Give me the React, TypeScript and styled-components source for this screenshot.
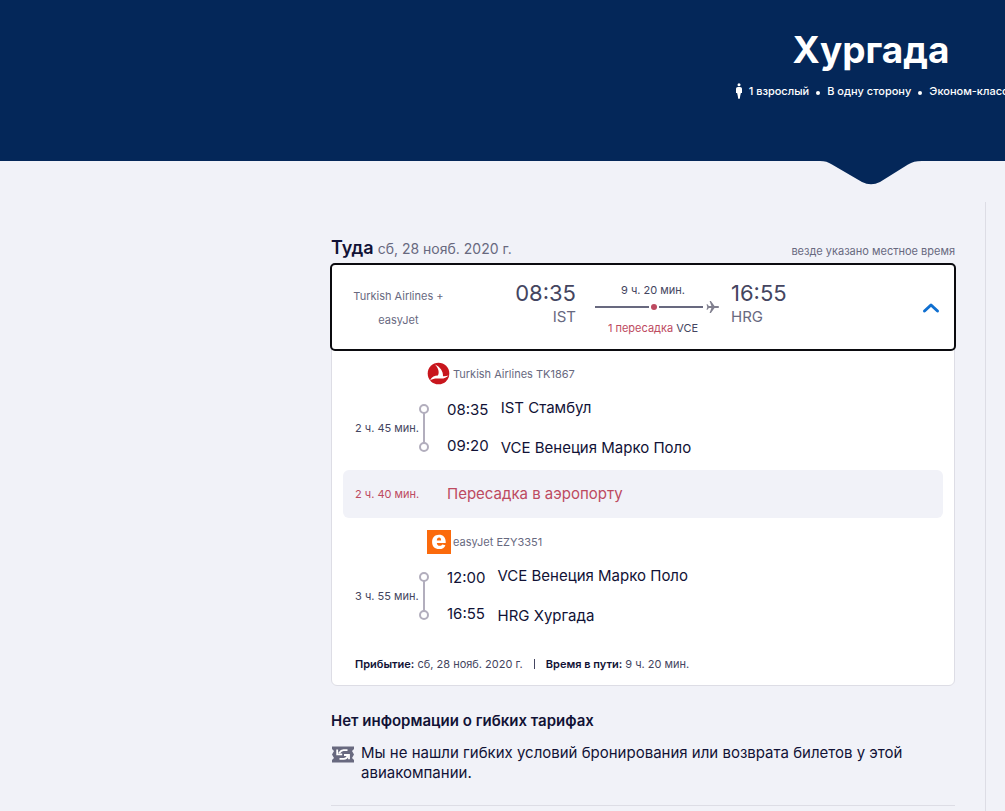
import React from 'react';
import styled, { createGlobalStyle } from 'styled-components';

const color = {
  navy: '#042759',
  page: '#f1f2f8',
  ink: '#111236',
  body: '#444560',
  muted: '#68697f',
  line: '#dddde5',
  rose: '#bd4a60',
};

const GlobalStyle = createGlobalStyle`
  *, *::before, *::after { box-sizing: border-box; }
  body {
    margin: 0;
    background: ${color.page};
    color: ${color.ink};
    font-family: Inter, "Liberation Sans", sans-serif;
    font-size: 15px;
    line-height: 20px;
  }
  h1, h2, p, ul { margin: 0; padding: 0; }
  ul { list-style: none; }
`;

const Page = styled.div`
  display: flex;
  flex-direction: column;
  min-height: 100vh;
  overflow-x: hidden;
`;

const Header = styled.header`
  position: relative;
  padding: 26px 0 60px 735px;
  background: ${color.navy};
  color: #fff;
`;

const HeaderInner = styled.div`
  display: flex;
  flex-direction: column;
  align-items: center;
  gap: 7px;
  width: 272px;
`;

const Title = styled.h1`
  font-size: 37px;
  line-height: 48px;
  font-weight: 650;
`;

const Facts = styled.ul`
  display: flex;
  align-items: center;
  font-size: 11px;
  font-weight: 500;
  white-space: nowrap;
`;

const Fact = styled.li`
  display: flex;
  align-items: center;
  gap: 5px;

  & + &::before {
    content: '';
    width: 4px;
    height: 4px;
    margin: 3px 2px 0 7px;
    border-radius: 50%;
    background: #fff;
  }
`;

const Pointer = styled.svg`
  position: absolute;
  top: 100%;
  left: 820px;
  margin-top: -1px;
`;

const Content = styled.div`
  display: flex;
  flex: 1;
  gap: 30px;
  padding: 41px 0 0 331px;
`;

const Main = styled.main`
  flex: 1;
  min-width: 0;
  padding-top: 33px;
`;

const Aside = styled.aside`
  width: 20px;
  border-left: 1px solid ${color.line};
`;

const LegHeading = styled.div`
  display: flex;
  align-items: flex-end;
  gap: 4px;
  padding-bottom: 3px;
`;

const LegTitle = styled.h2`
  font-size: 18px;
  line-height: 26px;
  font-weight: 600;
`;

const LegDate = styled.span`
  flex: 1;
  font-size: 14px;
  line-height: 24px;
  color: ${color.muted};
`;

const Small = styled.span<{ $tone?: string }>`
  font-size: 11px;
  color: ${(p) => p.$tone || color.muted};
`;

const Card = styled.section`
  border: 1px solid ${color.line};
  border-radius: 6px;
  background: #fff;
`;

const Summary = styled.button`
  display: grid;
  grid-template-columns: 133px 111px 124px 1fr 47px;
  align-items: center;
  width: 100%;
  height: 84px;
  padding: 0;
  border: 0;
  border-radius: 3px;
  outline: 2px solid #0b0b0f;
  background: #fff;
  color: ${color.body};
  font: inherit;
  text-align: left;
  cursor: pointer;
`;

const Airlines = styled.span`
  padding: 2px 16px 0;
  font-size: 11px;
  line-height: 24px;
  text-align: center;
  color: ${color.muted};
`;

const Stop = styled.span`
  display: flex;
  flex-direction: column;
  padding-bottom: 8px;
  text-align: right;
`;

const Arrival = styled(Stop)`
  padding-left: 31px;
  text-align: left;
`;

const StopTime = styled.span`
  font-size: 22px;
  line-height: 28px;
`;

const StopCode = styled.span`
  color: ${color.muted};
`;

const Route = styled.span`
  display: flex;
  flex-direction: column;
  align-items: center;
  width: 124px;
  margin-left: 19px;
  padding-top: 4px;
  font-size: 11px;
  white-space: nowrap;
`;

const RouteText = styled.span`
  padding-right: 8px;
`;

const Accent = styled.span`
  color: ${color.rose};
`;

const RouteLine = styled.svg`
  display: block;
  margin-bottom: 4px;
`;

const Details = styled.div`
  padding: 13px 11px 11px;
`;

const Carrier = styled.div`
  display: flex;
  align-items: center;
  gap: 2px;
  padding-left: 84px;
`;

const Segment = styled.div`
  display: grid;
  grid-template-columns: 74px 12px 1fr;
  align-items: center;
  padding: 18px 0;
`;

const Duration = styled(Small)`
  padding-left: 12px;
  white-space: nowrap;
`;

const SegmentText = styled.div`
  display: flex;
  align-items: center;
  gap: 12px;
  height: 48px;
  padding-left: 18px;
`;

const Times = styled.div`
  display: flex;
  flex-direction: column;
  gap: 16px;
`;

const Places = styled.div`
  display: flex;
  flex-direction: column;
  gap: 20px;
`;

const Transfer = styled.div`
  display: grid;
  grid-template-columns: 104px 1fr;
  align-items: center;
  height: 48px;
  margin-bottom: 12px;
  border-radius: 6px;
  background: ${color.page};
  color: ${color.rose};
`;

const Footer = styled.p`
  display: flex;
  gap: 11px;
  padding: 16px 0 0 12px;
  font-size: 11px;
  color: ${color.body};
`;

const Bar = styled.span`
  width: 1px;
  height: 10px;
  margin-top: 5px;
  background: ${color.body};
`;

const Strong = styled.strong`
  font-weight: 600;
  color: ${color.ink};
`;

const Policy = styled.section`
  margin-top: 25px;
  padding-bottom: 22px;
  border-bottom: 1px solid ${color.line};
`;

const PolicyTitle = styled.h2`
  font-size: 15px;
  line-height: 20px;
  font-weight: 600;
`;

const PolicyBody = styled.div`
  display: flex;
  gap: 6px;
  margin-top: 12px;
`;

const PolicyIcon = styled.svg`
  flex: none;
  margin-top: 3px;
`;

function Adult() {
  return (
    <svg width="10" height="16" viewBox="0 0 10 16" fill="#fff" aria-hidden="true">
      <circle cx="5" cy="1.800" r="1.500" />
      <path d="M4 4h2c1.300 0 2 .7 2 2v4H6.900L6.200 13 5.800 15.800H4.200L3.800 13 3.100 10H2V6C2 4.700 2.700 4 4 4Z" />
    </svg>
  );
}

function TurkishLogo() {
  return (
    <svg width="24" height="24" viewBox="0 0 24 24" aria-hidden="true">
      <circle cx="11.500" cy="11.500" r="10.800" fill="#c8161d" />
      <path
        d="M8 2.600C13 4.800 16.300 9.500 16 14.200c2 .1 3.900-.1 5.600-.7-2.100 2.200-5 3.300-8.300 3.100-3.600-.2-6.800-.6-10.400 1.900 2.100-3.700 4.700-4.900 7.900-4.900C12.600 11 11.700 6.600 8 2.600Z"
        fill="#fff"
      />
    </svg>
  );
}

function EasyJetLogo() {
  return (
    <svg width="24" height="24" viewBox="0 0 24 24" aria-hidden="true">
      <rect width="24" height="24" fill="#fb6a0c" />
      <path
        fillRule="evenodd"
        d="M12 4.700c4.300 0 6.700 2.700 6.700 7.200v1H9.800c.2 1.900 1.200 2.800 2.900 2.800 1.200 0 2.100-.5 2.600-1.300l3.100 .8c-.9 2.500-3.100 3.900-6.300 3.900-4.300 0-7-2.700-7-7.100 0-4.500 2.700-7.300 6.900-7.300ZM9.800 10.500h4.300c0-1.900-.7-2.900-2-2.900-1.400 0-2.200 1-2.300 2.900Z"
        fill="#fff"
      />
    </svg>
  );
}

function SegmentLine() {
  return (
    <svg width="12" height="48" viewBox="0 0 12 48" fill="none" stroke="#b2aebd" strokeWidth="2" aria-hidden="true">
      <path d="M7 9v30" />
      <circle cx="7" cy="5" r="4" fill="#fff" />
      <circle cx="7" cy="43" r="4" fill="#fff" />
    </svg>
  );
}

type SegmentProps = {
  duration: string;
  stops: { time: string; place: string }[];
};

function FlightSegment({ duration, stops }: SegmentProps) {
  return (
    <Segment>
      <Duration $tone={color.body}>{duration}</Duration>
      <SegmentLine />
      <SegmentText>
        <Times>
          {stops.map((s) => (
            <time key={s.time}>{s.time}</time>
          ))}
        </Times>
        <Places>
          {stops.map((s) => (
            <span key={s.place}>{s.place}</span>
          ))}
        </Places>
      </SegmentText>
    </Segment>
  );
}

export default function App() {
  return (
    <Page>
      <GlobalStyle />
      <Header>
        <HeaderInner>
          <Title>Хургада</Title>
          <Facts>
            <Fact>
              <Adult />1 взрослый
            </Fact>
            <Fact>В одну сторону</Fact>
            <Fact>Эконом-класс</Fact>
          </Facts>
        </HeaderInner>
        <Pointer width="102" height="25" viewBox="0 0 102 25" fill={color.navy} aria-hidden="true">
          <path d="M0 0V1C5 1 8 2 12 4.500L42 22Q51 26.500 60 22L88 4.500C92 2 96 1 102 1V0Z" />
        </Pointer>
      </Header>
      <Content>
        <Main>
          <LegHeading>
            <LegTitle>Туда</LegTitle>
            <LegDate>сб, 28 нояб. 2020 г.</LegDate>
            <Small>везде указано местное время</Small>
          </LegHeading>
          <Card>
            <Summary type="button" aria-expanded="true">
              <Airlines>Turkish Airlines + easyJet</Airlines>
              <Stop>
                <StopTime>08:35</StopTime>
                <StopCode>IST</StopCode>
              </Stop>
              <Route>
                <RouteText>9 ч. 20 мин.</RouteText>
                <RouteLine width="124" height="14" viewBox="0 0 124 14" aria-hidden="true">
                  <path d="M0 7h54M64 7h44" stroke="#68697f" strokeWidth="2" />
                  <circle cx="59" cy="7" r="3" fill={color.rose} />
                  <path
                    d="M124 7c0 .6-.5 1-1.200 1H119.500l-3.600 5h-1.300l1.800-5H113.800l-1.300 1.800h-1L112.300 7l-.8-2.800h1l1.300 1.800h2.600l-1.800-5h1.300l3.600 5h3.300c.7 0 1.200 .4 1.200 1Z"
                    fill="#81808f"
                  />
                </RouteLine>
                <RouteText>
                  <Accent>1 пересадка</Accent> VCE
                </RouteText>
              </Route>
              <Arrival>
                <StopTime>16:55</StopTime>
                <StopCode>HRG</StopCode>
              </Arrival>
              <svg width="47" height="24" viewBox="0 0 47 24" fill="none" aria-hidden="true">
                <path d="M17.500 16l6.500-6 6.500 6" stroke="#0f6fd0" strokeWidth="3" strokeLinecap="round" strokeLinejoin="round" />
              </svg>
            </Summary>
            <Details>
              <Carrier>
                <TurkishLogo />
                <Small>Turkish Airlines TK1867</Small>
              </Carrier>
              <FlightSegment
                duration="2 ч. 45 мин."
                stops={[
                  { time: '08:35', place: 'IST Стамбул' },
                  { time: '09:20', place: 'VCE Венеция Марко Поло' },
                ]}
              />
              <Transfer>
                <Duration $tone={color.rose}>2 ч. 40 мин.</Duration>
                <span>Пересадка в аэропорту</span>
              </Transfer>
              <Carrier>
                <EasyJetLogo />
                <Small>easyJet EZY3351</Small>
              </Carrier>
              <FlightSegment
                duration="3 ч. 55 мин."
                stops={[
                  { time: '12:00', place: 'VCE Венеция Марко Поло' },
                  { time: '16:55', place: 'HRG Хургада' },
                ]}
              />
              <Footer>
                <span>
                  <Strong>Прибытие:</Strong> сб, 28 нояб. 2020 г.
                </span>
                <Bar />
                <span>
                  <Strong>Время в пути:</Strong> 9 ч. 20 мин.
                </span>
              </Footer>
            </Details>
          </Card>
          <Policy>
            <PolicyTitle>Нет информации о гибких тарифах</PolicyTitle>
            <PolicyBody>
              <PolicyIcon width="24" height="17" viewBox="0 0 24 17" aria-hidden="true">
                <path d="M1 0.500h22v2.500l-2 2 2 3.500-2 3.500 2 2v2.500H1V14l2-2L1 8.500 3 5 1 3Z" fill="#68697f" />
                <g fill="none" stroke="#fff" strokeWidth="1.800">
                  <path d="M16.500 4.200H12.500C10.800 4.200 9.500 5.200 8 7.200" />
                  <path d="M6.200 3.500v4.800h5" />
                  <path d="M8.500 12.800H13c1.800 0 3-1.200 3.800-2.800" />
                  <path d="M18 13.200V9h-5" />
                </g>
              </PolicyIcon>
              <p>Мы не нашли гибких условий бронирования или возврата билетов у этой авиакомпании.</p>
            </PolicyBody>
          </Policy>
        </Main>
        <Aside />
      </Content>
    </Page>
  );
}
